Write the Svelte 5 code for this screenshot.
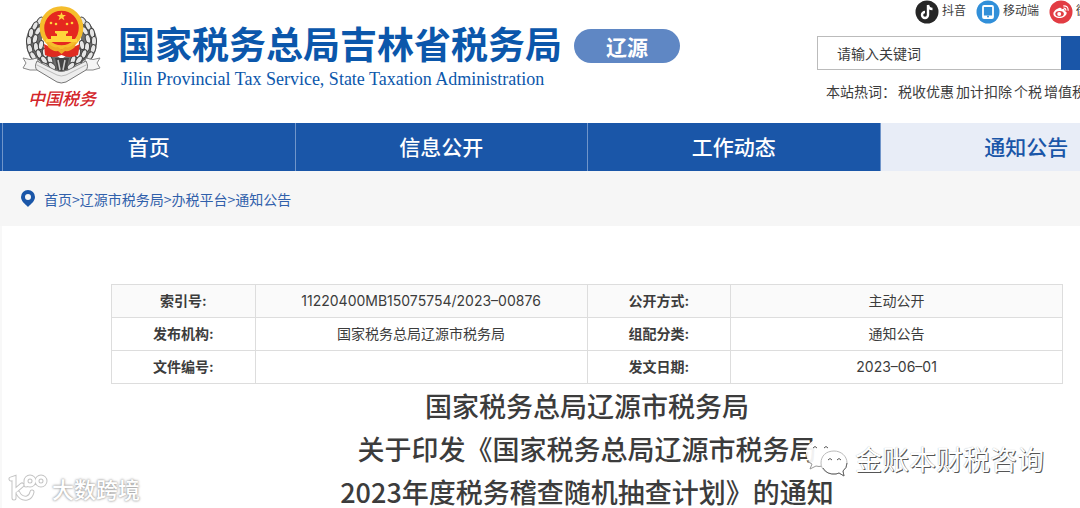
<script>
	const navItems = ['首页', '信息公开', '工作动态', '通知公告'];
	const activeNav = '通知公告';

	const crumbs = ['首页', '辽源市税务局', '办税平台', '通知公告'];
	const hotWords = ['税收优惠', '加计扣除', '个税', '增值税'];

	const rows = [
		['索引号:', '11220400MB15075754/2023–00876', '公开方式:', '主动公开'],
		['发布机构:', '国家税务总局辽源市税务局', '组配分类:', '通知公告'],
		['文件编号:', '', '发文日期:', '2023–06–01']
	];

	// x, y and tilt of each grain on the left ear of wheat
	const grains = [
		[18, 17, 35], [13, 22, 25], [9, 29, 10], [16, 27, 30], [7, 37, 0], [13, 35, 15],
		[8, 45, -15], [14, 43, -5], [19, 41, 10], [11, 52, -30], [17, 50, -20], [23, 49, -10],
		[16, 58, -50], [22, 56, -35], [28, 56, -20], [23, 62, -60], [30, 62, -45]
	];

	let keyword = $state('');
</script>

<div class="viewport">
	<div class="page">
		<header>
			<div class="emblem">
				<svg viewBox="0 0 80 82" width="80" height="82" aria-hidden="true">
					{#each ['', 'translate(79 0) scale(-1 1)'] as side}
						<g transform={side}>
							<path d="M20 13Q3 24 4 40Q6 60 26 66L38 68L38 54L20 42Z" fill="#6d6d6d" />
							{#each grains as [x, y, angle]}
								<ellipse cx={x} cy={y} rx="2.500" ry="4.500" fill="#e6e6e6" stroke="#444" stroke-width="1" transform="rotate({angle} {x} {y})" />
							{/each}
						</g>
					{/each}
					<path d="M33 54h14l-3 14h-8z" fill="#444" />
					<path d="M36 56l2 10M43 56l-2 10" stroke="#ccc" stroke-width="1.500" />
					<path d="M22 40Q39.500 50 58 40L56 51Q48 55 39.500 51Q31 55 23 51Z" fill="#df2a20" />
					<circle cx="39.500" cy="24" r="18" fill="#e5281f" />
					<circle cx="39.500" cy="24" r="19.500" fill="none" stroke="#f5bd2c" stroke-width="4.500" />
					<path d="M25 38q6 7 11 5l3.500 3 3.500-3q5 2 11-5l-1 5q-5 5-10 4l-3.500 3-3.500-3q-5 1-10-4z" fill="#f0aa26" />
					<path d="M39.500 8l1.200 3h3.300l-2.600 2 1 3.200-2.900-1.900-2.900 1.900 1-3.200-2.600-2h3.300z" fill="#ffd43b" />
					<g fill="#ffd43b">
						<circle cx="29" cy="19" r="1.300" />
						<circle cx="34" cy="20" r="1.300" />
						<circle cx="45" cy="20" r="1.300" />
						<circle cx="50" cy="19" r="1.300" />
						<path d="M33 27h13v2l-2 1v2h6v3h5v3H24v-3h5v-3h6v-2l-2-1z" />
					</g>
					<path d="M1 54q7 3 14 0l3 8-3 4Q8 67 1 64l3-5zM78 54q-7 3-14 0l-3 8 3 4q7 1 14-2l-3-5z" fill="#f5f5f5" stroke="#888" stroke-width="1" />
					<path d="M15 57q-3 6 0 9l20 12q4 2 9 0l20-12q3-3 0-9l-18 9q-7 3-13 0z" fill="#ededed" stroke="#777" stroke-width="1" />
					<path d="M15 61l20 10q4 2 9 0l20-10" fill="none" stroke="#bbb" stroke-width="1" />
				</svg>
				<span>中国税务</span>
			</div>
			<div class="brand">
				<h1>国家税务总局吉林省税务局</h1>
				<p>Jilin Provincial Tax Service, State Taxation Administration</p>
			</div>
			<span class="city">辽源</span>

			<div class="tools">
				<div class="social">
					<a href="#douyin">
						<svg viewBox="0 0 24 24" width="24" height="24" aria-hidden="true">
							<circle cx="12" cy="12" r="11.500" fill="#262626" />
							<path d="M13 5v10a3 3 0 1 1-3-3M13 5q.5 4 4.500 4" fill="none" stroke="#fff" stroke-width="2.400" />
						</svg>
						抖音
					</a>
					<a href="#mobile">
						<svg viewBox="0 0 24 24" width="24" height="24" aria-hidden="true">
							<circle cx="12" cy="12" r="11.500" fill="#318fd9" />
							<rect x="7" y="6" width="10" height="12" rx="1" fill="none" stroke="#fff" stroke-width="1.800" />
							<path d="M7 15.500h10v2.500H7z" fill="#fff" />
							<circle cx="12" cy="16.500" r="1" fill="#318fd9" />
						</svg>
						移动端
					</a>
					<a href="#weibo">
						<svg viewBox="0 0 24 24" width="24" height="24" aria-hidden="true">
							<circle cx="12" cy="12" r="11.500" fill="#e23c43" />
							<path d="M10 8c1.600-.8 3 0 2.600 1.400 2-.8 3.600-.2 3 1.500 1.600.5 2.400 1.500 2 2.600-.6 2.500-3.800 4.500-7 4.500-3.500 0-6.200-1.800-6.200-4.300 0-2.200 3-4.900 5.600-5.700z" fill="#fff" />
							<ellipse cx="10.600" cy="13.800" rx="4.300" ry="2.900" fill="#e23c43" />
							<circle cx="10.200" cy="13.900" r="2" fill="#fff" />
							<path d="M14.500 8.200q2.500-.2 2.300 2.400M14.300 5.800q5-.3 4.900 4.900" fill="none" stroke="#fff" stroke-width="1.200" />
						</svg>
						微博
					</a>
				</div>
				<form class="search" onsubmit={(e) => e.preventDefault()}>
					<input type="text" aria-label="关键词" placeholder="请输入关键词" bind:value={keyword} />
					<button type="submit" aria-label="搜索"></button>
				</form>
				<div class="hot">
					<span>本站热词：</span>
					{#each hotWords as word}
						<a href="#{word}">{word}</a>
					{/each}
				</div>
			</div>
		</header>

		<nav>
			{#each navItems as item}
				<a href="#{item}" class:active={item === activeNav}>{item}</a>
			{/each}
		</nav>

		<div class="crumbs">
			<svg viewBox="0 0 14 17" width="14" height="17" aria-hidden="true">
				<path d="M7 0a7 7 0 0 1 7 7c0 4-4 7-7 10C4 14 0 11 0 7a7 7 0 0 1 7-7zm0 4a3 3 0 1 0 0 6 3 3 0 0 0 0-6z" fill="#1a56a8" fill-rule="evenodd" />
			</svg>
			<div>
				{#each crumbs as crumb, i}{#if i}&gt;{/if}<a href="#{crumb}">{crumb}</a>{/each}
			</div>
		</div>

		<main>
			<table>
				<tbody>
					{#each rows as row}
						<tr>
							<th scope="row">{row[0]}</th>
							<td>{row[1]}</td>
							<th scope="row">{row[2]}</th>
							<td>{row[3]}</td>
						</tr>
					{/each}
				</tbody>
			</table>
			<h2>
				国家税务总局辽源市税务局<br />
				关于印发《国家税务总局辽源市税务局<br />
				2023年度税务稽查随机抽查计划》的通知
			</h2>
		</main>
	</div>

	<div class="mark source">
		<svg viewBox="0 0 40 30" width="40" height="30" aria-hidden="true">
			<g fill="none" stroke-linecap="round">
				<g stroke="#c4c4c4" stroke-width="5">
					<path d="M3 6l3-1v20M14 12l-7 6M10 20q3 6 9 5 4-1 5-6" />
					<path d="M18 12V8M22 4a4 4 0 1 1 0 8 4 4 0 1 1 0-8M33 4a4 4 0 1 1 0 8 4 4 0 1 1 0-8" />
				</g>
				<g stroke="#fff" stroke-width="3">
					<path d="M3 6l3-1v20M14 12l-7 6M10 20q3 6 9 5 4-1 5-6" />
					<path d="M18 12V8M22 4a4 4 0 1 1 0 8 4 4 0 1 1 0-8M33 4a4 4 0 1 1 0 8 4 4 0 1 1 0-8" />
				</g>
			</g>
		</svg>
		<span>大数跨境</span>
	</div>

	<div class="mark account">
		<svg viewBox="0 0 42 40" width="42" height="40" aria-hidden="true">
			<path d="M15 1C6 1 0 7 0 15q0 7 6 11l-2 5 6-3q5 2 10 0C29 26 30 19 29 12 27 5 22 1 15 1z" fill="#fff" fill-opacity=".93" />
			<path d="M1 22q2 3 5 4l-2 5 6-3q3 1 6 0" fill="none" stroke="#999" stroke-width="1" />
			<path d="M7 10q2-3 4 0M18 10q2-3 4 0" fill="none" stroke="#555" stroke-width="1" />
			<path d="M28 13c-8 0-13 5-13 12s6 11 13 11q3 0 5-1l5 3-1-5q4-3 4-8c0-7-6-12-13-12z" fill="#fff" stroke="#bbb" stroke-width="1" />
			<path d="M17 30q4 7 13 6l3-1 5 3-1-5q4-3 4-8" fill="none" stroke="#666" stroke-width="1" />
			<path d="M22 22q2-3 4 0M31 22q2-3 4 0" fill="none" stroke="#555" stroke-width="1" />
		</svg>
		<span>金账本财税咨询</span>
	</div>
</div>

<style>
	:global(body) {
		margin: 0;
		background: #fff;
	}

	.viewport {
		position: relative;
		height: 100vh;
		overflow: hidden;
		font-family: 'Noto Sans CJK SC', sans-serif;
		color: #3c3c3c;
	}

	.page {
		min-width: 1172px;
	}

	a {
		color: inherit;
		text-decoration: none;
	}

	header {
		display: flex;
		align-items: flex-start;
		height: 123px;
		padding-left: 22px;
	}

	.emblem {
		display: flex;
		flex-direction: column;
		align-items: center;
		width: 80px;
		padding-top: 4px;
	}

	.emblem span {
		color: #d3262b;
		font-size: 17px;
		font-style: italic;
		font-weight: 500;
		line-height: 24px;
	}

	.brand {
		margin-left: 16px;
		padding-top: 21px;
		color: #0b57ab;
	}

	h1 {
		margin: 0;
		font-size: 37px;
		font-weight: 700;
		line-height: 44px;
	}

	.brand p {
		margin: 0;
		padding-left: 3px;
		font-family: 'Liberation Serif', serif;
		font-size: 18px;
		line-height: 28px;
	}

	.city {
		width: 106px;
		margin: 29px 0 0 12px;
		border-radius: 17px;
		background: #5f87c4;
		color: #fff;
		font-size: 21px;
		font-weight: 700;
		line-height: 34px;
		text-align: center;
	}

	.tools {
		width: 333px;
		margin-left: auto;
		margin-right: 22px;
	}

	.social {
		display: flex;
		gap: 10px;
		padding-left: 98px;
		font-size: 12px;
		line-height: 20px;
	}

	.social a {
		display: flex;
		gap: 3px;
		height: 36px;
		white-space: nowrap;
	}

	.search {
		display: flex;
		height: 34px;
	}

	.search input {
		box-sizing: border-box;
		width: 244px;
		padding: 0 19px;
		border: 1px solid #bbb;
		border-right: 0;
		background: #fff;
		color: #3c3c3c;
		font-family: inherit;
		font-size: 14px;
	}

	.search input::placeholder {
		color: #3c3c3c;
		opacity: 1;
	}

	.search button {
		flex: 1;
		border: 0;
		background: #1a56a8;
	}

	.hot {
		display: flex;
		gap: 2px;
		padding: 9px 0 0 9px;
		font-size: 14px;
		line-height: 24px;
		white-space: nowrap;
	}

	nav {
		display: flex;
		height: 48px;
		border-left: 2px solid #1a56a8;
		background: #1a56a8;
	}

	nav a {
		flex: 1;
		border-left: 1px solid #7095ca;
		color: #fff;
		font-size: 21px;
		font-weight: 500;
		line-height: 46px;
		text-align: center;
	}

	nav a.active {
		background: #e8edf7;
		color: #1a56a8;
	}

	.crumbs {
		display: flex;
		align-items: center;
		gap: 9px;
		height: 55px;
		padding-left: 21px;
		background: #f6f6f6;
		color: #3060ab;
		font-size: 14px;
	}

	main {
		padding: 58px 109px 0;
		border-left: 2px solid #f8f8f8;
	}

	table {
		width: 100%;
		border-collapse: collapse;
		table-layout: fixed;
		font-family: Inter, 'Noto Sans CJK SC', sans-serif;
		font-size: 14px;
		line-height: 20px;
		text-align: center;
	}

	tr:first-child {
		background: #fafafa;
	}

	th,
	td {
		height: 20px;
		padding: 6px 0;
		border: 1px solid #ddd;
	}

	th {
		width: 15%;
		font-weight: 700;
	}

	h2 {
		margin: 0;
		font-size: 27px;
		font-weight: 500;
		line-height: 43px;
		text-align: center;
	}

	.mark {
		position: absolute;
		display: flex;
		align-items: center;
		color: #fff;
		white-space: nowrap;
	}

	.source {
		left: 8px;
		bottom: 4px;
		gap: 4px;
		font-size: 22px;
		font-weight: 500;
		text-shadow: 0 0 2px #999, 0 0 3px #aaa;
	}

	.account {
		right: 36px;
		bottom: 30px;
		gap: 7px;
		font-size: 27px;
		text-shadow: 1px 1px 0 #555, 0 0 1px #aaa;
	}
</style>
